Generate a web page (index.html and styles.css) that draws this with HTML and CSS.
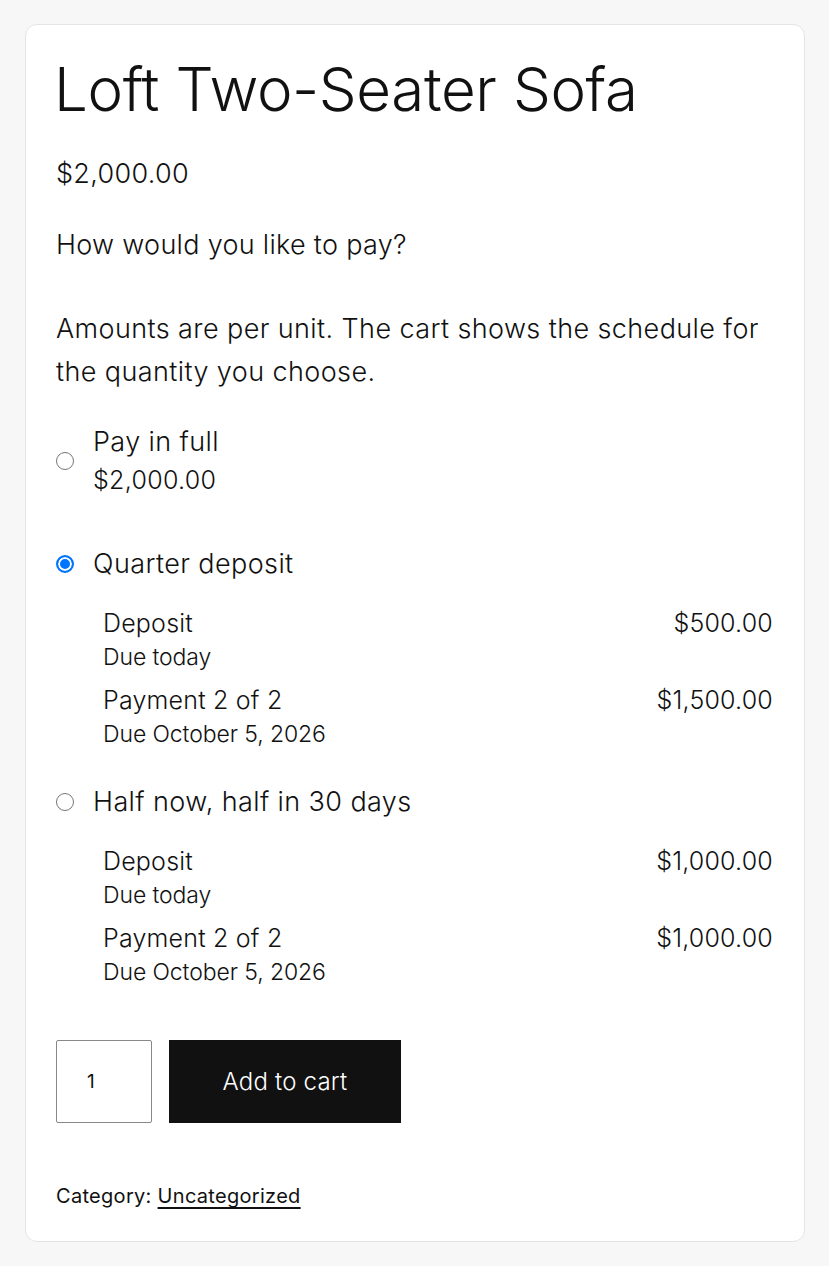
FILE: index.html
```html
<!DOCTYPE html>
<html lang="en">
    <head>
        <title>Loft Two-Seater Sofa</title>
        <link rel="stylesheet" href="styles.css">
    </head>
    <body>
        <main class="product">
            <h1 class="title">Loft Two-Seater Sofa</h1>
            <p class="price">$2,000.00</p>

            <form class="plans">
                <p class="question">How would you like to pay?</p>
                <p class="note">Amounts are per unit. The cart shows the schedule for the quantity you choose.</p>

                <!-- Pay in full -->
                <label class="plan plan-full">
                    <input type="radio" name="plan" value="full">
                    <span class="plan-text">
                        <span class="plan-name">Pay in full</span>
                        <span class="plan-amount">$2,000.00</span>
                    </span>
                </label>

                <!-- Quarter deposit -->
                <label class="plan">
                    <input type="radio" name="plan" value="quarter" checked>
                    <span class="plan-name">Quarter deposit</span>
                </label>
                <ul class="schedule">
                    <li class="row">
                        <div>
                            <p class="row-label">Deposit</p>
                            <p class="row-due">Due today</p>
                        </div>
                        <p class="row-amount">$500.00</p>
                    </li>
                    <li class="row">
                        <div>
                            <p class="row-label">Payment 2 of 2</p>
                            <p class="row-due">Due October 5, 2026</p>
                        </div>
                        <p class="row-amount">$1,500.00</p>
                    </li>
                </ul>

                <!-- Half now -->
                <label class="plan">
                    <input type="radio" name="plan" value="half">
                    <span class="plan-name">Half now, half in 30 days</span>
                </label>
                <ul class="schedule">
                    <li class="row">
                        <div>
                            <p class="row-label">Deposit</p>
                            <p class="row-due">Due today</p>
                        </div>
                        <p class="row-amount">$1,000.00</p>
                    </li>
                    <li class="row">
                        <div>
                            <p class="row-label">Payment 2 of 2</p>
                            <p class="row-due">Due October 5, 2026</p>
                        </div>
                        <p class="row-amount">$1,000.00</p>
                    </li>
                </ul>

                <div class="cart">
                    <input class="qty" type="number" value="1" min="1">
                    <button class="add" type="button">Add to cart</button>
                </div>
            </form>

            <p class="meta">Category: <a href="#">Uncategorized</a></p>
        </main>
    </body>
</html>
```

FILE: styles.css
```css
body {
    margin: 0;
    padding: 24px 24px 24px 25px;
    background: #f6f7f6;
    color: #111;
    font-family: Inter, "Noto Sans", sans-serif;
    font-weight: 300;
}

p {
    margin: 0;
}

/* Card */
.product {
    background: #fff;
    border: 1px solid #e3e5e3;
    border-radius: 12px;
    padding: 28px 31px 31px 30px;
}

.title {
    margin: 0 0 0 -2px;
    font-size: 60px;
    font-weight: 300;
    line-height: 72px;
    letter-spacing: -0.4px;
}

.price {
    margin-top: 29px;
    font-size: 27px;
    line-height: 40px;
    letter-spacing: 0.3px;
}

.question {
    margin-top: 31px;
    font-size: 27px;
    line-height: 40px;
    letter-spacing: 0.3px;
}

.note {
    margin-top: 42px;
    font-size: 27px;
    line-height: 43px;
    letter-spacing: 0.4px;
}

/* Options */
.plan {
    display: flex;
    align-items: center;
    gap: 19px;
    margin-top: 44px;
    font-size: 27px;
    line-height: 39px;
    letter-spacing: 0.4px;
}

.plan-full {
    margin-top: 29px;
}

.plan input {
    appearance: none;
    box-sizing: border-box;
    flex: none;
    width: 18px;
    height: 18px;
    margin: 0;
    border: 1.5px solid #777;
    border-radius: 50%;
    background: #fff;
}

.plan input:checked {
    border: 2px solid #0075ff;
    background: #0075ff;
    box-shadow: inset 0 0 0 2px #fff;
}

.plan-text {
    display: flex;
    flex-direction: column;
}

.plan-amount {
    font-size: 25px;
    letter-spacing: 0.3px;
}

.schedule {
    list-style: none;
    margin: 23px 0 0 47px;
    padding: 0;
}

.schedule + .plan {
    margin-top: 31px;
}

.row {
    display: flex;
    justify-content: space-between;
    margin-bottom: 9px;
}

.row:last-child {
    margin-bottom: 0;
}

.row-label,
.row-amount {
    font-size: 25px;
    line-height: 34px;
    letter-spacing: 0.2px;
}

.row-due {
    font-size: 23px;
    line-height: 34px;
    letter-spacing: -0.1px;
}

/* Cart */
.cart {
    display: flex;
    gap: 17px;
    margin-top: 51px;
}

.qty {
    box-sizing: border-box;
    width: 96px;
    height: 83px;
    padding: 0 0 0 30px;
    border: 1px solid #888;
    border-radius: 2px;
    font-family: inherit;
    font-size: 19px;
    font-weight: 400;
    color: #111;
}

.add {
    width: 232px;
    height: 83px;
    border: 0;
    background: #111;
    color: #fff;
    font-family: inherit;
    font-size: 24px;
    font-weight: 300;
    letter-spacing: 0.2px;
}

.meta {
    margin-top: 60px;
    font-size: 20px;
    line-height: 27px;
    font-weight: 400;
    letter-spacing: 0.3px;
}

.meta a {
    color: inherit;
    text-underline-offset: 4px;
}
```
